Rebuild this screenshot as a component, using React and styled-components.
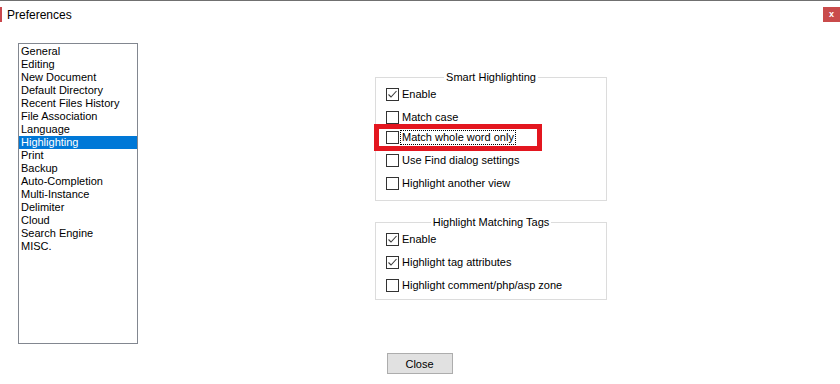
import styled, { createGlobalStyle } from 'styled-components';

const GlobalStyle = createGlobalStyle`
  html, body {
    margin: 0;
    padding: 0;
    background: #ffffff;
  }
  body {
    font-family: "Liberation Sans", Arial, sans-serif;
    font-size: 11px;
    color: #000000;
  }
`;

const Window = styled.div`
  width: 840px;
  height: 384px;
  background: #ffffff;
  display: flex;
  flex-direction: column;
  box-sizing: border-box;
  border-top: 1px solid #707070;
  overflow: hidden;
`;

const TitleBar = styled.div`
  height: 25px;
  display: flex;
  align-items: center;
  padding-top: 1px;
`;

const Accent = styled.div`
  width: 2px;
  height: 15px;
  background: #c9474c;
`;

const Title = styled.div`
  margin-left: 5px;
  font-size: 12px;
  flex: 1;
`;

const CloseX = styled.div`
  width: 17px;
  height: 15px;
  background: #c94b4b;
  color: #ffffff;
  font-size: 9px;
  font-weight: bold;
  display: flex;
  align-items: center;
  justify-content: center;
  line-height: 1;
`;

const Main = styled.div`
  display: flex;
  padding: 16px 0 0 18px;
`;

const ListBox = styled.div`
  width: 120px;
  height: 301px;
  box-sizing: border-box;
  border: 1px solid #828790;
  padding-top: 1px;
  display: flex;
  flex-direction: column;
`;

const ListItem = styled.div`
  height: 13px;
  line-height: 13px;
  padding-left: 2px;
  white-space: nowrap;
  background: ${(p) => (p.$selected ? '#0078d7' : 'transparent')};
  color: ${(p) => (p.$selected ? '#ffffff' : '#000000')};
`;

const Groups = styled.div`
  margin-left: 237px;
  margin-top: 28px;
  display: flex;
  flex-direction: column;
  gap: 15px;
`;

const Group = styled.fieldset`
  width: 232px;
  box-sizing: border-box;
  margin: 0;
  padding: 4px 10px ${(p) => p.$bottom}px 10px;
  border: 1px solid #dcdcdc;
  display: flex;
  flex-direction: column;
`;

const Legend = styled.legend`
  margin: 0 auto;
  padding: 0 2px;
  line-height: 13px;
  font-size: 11px;
`;

const Row = styled.div`
  position: relative;
  height: 13px;
  margin-top: ${(p) => p.$gap}px;
  display: flex;
  align-items: center;
`;

const Box = styled.span`
  width: 13px;
  height: 13px;
  box-sizing: border-box;
  border: 1px solid #333333;
  background: #ffffff;
  display: flex;
  align-items: center;
  justify-content: center;
  flex: none;
`;

const Label = styled.span`
  margin-left: 1px;
  padding: 0 1px;
  line-height: 13px;
  border: 1px ${(p) => (p.$focused ? 'dotted #000000' : 'solid transparent')};
  white-space: nowrap;
`;

const Annotation = styled.div`
  position: absolute;
  left: -12px;
  top: -7px;
  width: 168px;
  height: 27px;
  box-sizing: border-box;
  border: 5px solid #e3161f;
  pointer-events: none;
`;

const Footer = styled.div`
  display: flex;
  justify-content: center;
  margin-top: 9px;
`;

const Button = styled.button`
  width: 66px;
  height: 21px;
  box-sizing: border-box;
  background: #e1e1e1;
  border: 1px solid #adadad;
  font-family: "Liberation Sans", Arial, sans-serif;
  font-size: 11px;
  color: #000000;
  padding: 0;
  margin-left: -1px;
`;

const Check = () => (
  <svg width="11" height="11" viewBox="0 0 11 11">
    <polyline points="1.5,5.5 4,8 9.5,2" fill="none" stroke="#3c3c3c" strokeWidth="1.1" />
  </svg>
);

const CheckRow = ({ checked, focused, marked, gap = 10, children }) => (
  <Row $gap={gap}>
    <Box>{checked && <Check />}</Box>
    <Label $focused={focused}>{children}</Label>
    {marked && <Annotation />}
  </Row>
);

const pages = [
  'General',
  'Editing',
  'New Document',
  'Default Directory',
  'Recent Files History',
  'File Association',
  'Language',
  'Highlighting',
  'Print',
  'Backup',
  'Auto-Completion',
  'Multi-Instance',
  'Delimiter',
  'Cloud',
  'Search Engine',
  'MISC.',
];

export default function App() {
  return (
    <>
      <GlobalStyle />
      <Window>
        <TitleBar>
          <Accent />
          <Title>Preferences</Title>
          <CloseX>x</CloseX>
        </TitleBar>
        <Main>
          <ListBox>
            {pages.map((p) => (
              <ListItem key={p} $selected={p === 'Highlighting'}>
                {p}
              </ListItem>
            ))}
          </ListBox>
          <Groups>
            <Group $bottom={10}>
              <Legend>Smart Highlighting</Legend>
              <CheckRow checked gap={0}>Enable</CheckRow>
              <CheckRow>Match case</CheckRow>
              <CheckRow focused marked gap={7}>Match whole word only</CheckRow>
              <CheckRow>Use Find dialog settings</CheckRow>
              <CheckRow>Highlight another view</CheckRow>
            </Group>
            <Group $bottom={7}>
              <Legend>Highlight Matching Tags</Legend>
              <CheckRow checked gap={0}>Enable</CheckRow>
              <CheckRow checked>Highlight tag attributes</CheckRow>
              <CheckRow>Highlight comment/php/asp zone</CheckRow>
            </Group>
          </Groups>
        </Main>
        <Footer>
          <Button>Close</Button>
        </Footer>
      </Window>
    </>
  );
}
